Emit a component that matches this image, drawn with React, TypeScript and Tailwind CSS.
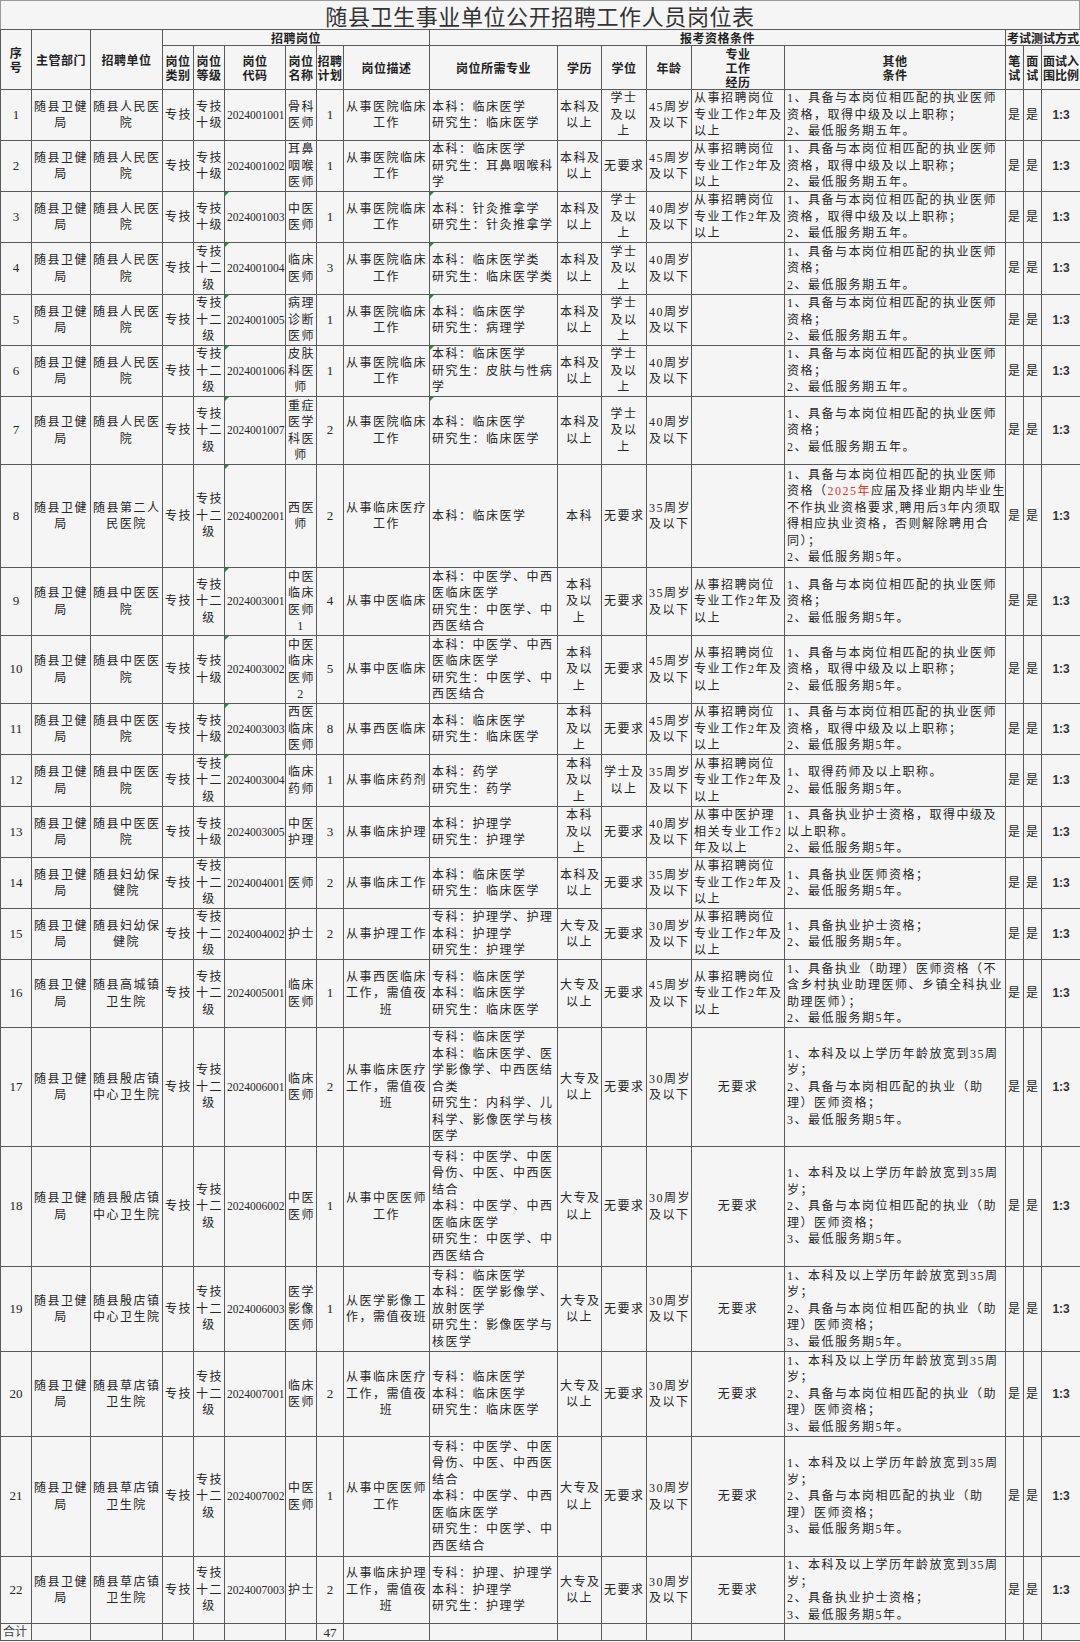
import React from 'react';
import clsx from 'clsx';

type Row = {
  no: number;
  unit: string;
  grade: string;
  code: string;
  name: string;
  plan: number;
  desc: string;
  major: string;
  edu: string;
  degree: string;
  age: string;
  exp: string;
  other: React.ReactNode;
  h: string;
  mark?: 'code' | 'both';
};

const dept = '随县卫健\n局';
const g10 = '专技\n十级';
const g12 = '专技\n十二\n级';
const exp2 = '从事招聘岗位\n专业工作2年及\n以上';
const edu1 = '本科及\n以上';
const edu2 = '本科\n及以\n上';
const edu3 = '大专及\n以上';
const deg1 = '学士\n及以\n上';
const none = '无要求';
const descHosp = '从事医院临床\n工作';

const oth1 = '1、具备与本岗位相匹配的执业医师\n资格，取得中级及以上职称；\n2、最低服务期五年。';
const oth4 = '1、具备与本岗位相匹配的执业医师\n资格；\n2、最低服务期五年。';
const oth9 = '1、具备与本岗位相匹配的执业医师\n资格；\n2、最低服务期5年。';
const oth10 = '1、具备与本岗位相匹配的执业医师\n资格，取得中级及以上职称；\n2、最低服务期5年。';
const oth17 = '1、本科及以上学历年龄放宽到35周\n岁；\n2、具备与本岗相匹配的执业（助\n理）医师资格；\n3、最低服务期5年。';
const oth18 = '1、本科及以上学历年龄放宽到35周\n岁；\n2、具备与本岗位相匹配的执业（助\n理）医师资格；\n3、最低服务期5年。';
const oth22 = '1、本科及以上学历年龄放宽到35周\n岁；\n2、具备执业护士资格；\n3、最低服务期5年。';

// row 8 has a red year inside, so lines are laid out one by one
const oth8 = (
  <>
    <div>1、具备与本岗位相匹配的执业医师</div>
    <div>
      资格（<span className="text-[#d9352b]">2025年</span>应届及择业期内毕业生
    </div>
    <div>不作执业资格要求,聘用后3年内须取</div>
    <div>得相应执业资格，否则解除聘用合</div>
    <div>同）；</div>
    <div>2、最低服务期5年。</div>
  </>
);

const tcmMajor = '本科：中医学、中西\n医临床医学\n研究生：中医学、中\n西医结合';
const tcmMajor3 = '专科：中医学、中医\n骨伤、中医、中西医\n结合\n本科：中医学、中西\n医临床医学\n研究生：中医学、中\n西医结合';

const rows: Row[] = [
  { no: 1, unit: '随县人民医\n院', grade: g10, code: '2024001001', name: '骨科\n医师', plan: 1, desc: descHosp, major: '本科：临床医学\n研究生：临床医学', edu: edu1, degree: deg1, age: '45周岁\n及以下', exp: exp2, other: oth1, h: 'h-[51px]' },
  { no: 2, unit: '随县人民医\n院', grade: g10, code: '2024001002', name: '耳鼻\n咽喉\n医师', plan: 1, desc: descHosp, major: '本科：临床医学\n研究生：耳鼻咽喉科\n学', edu: edu1, degree: none, age: '45周岁\n及以下', exp: exp2, other: oth1, h: 'h-[51px]' },
  { no: 3, unit: '随县人民医\n院', grade: g10, code: '2024001003', name: '中医\n医师', plan: 1, desc: descHosp, major: '本科：针灸推拿学\n研究生：针灸推拿学', edu: edu1, degree: deg1, age: '40周岁\n及以下', exp: exp2, other: oth1, h: 'h-[51px]', mark: 'both' },
  { no: 4, unit: '随县人民医\n院', grade: g12, code: '2024001004', name: '临床\n医师', plan: 3, desc: descHosp, major: '本科：临床医学类\n研究生：临床医学类', edu: edu1, degree: deg1, age: '40周岁\n及以下', exp: '', other: oth4, h: 'h-[52px]', mark: 'both' },
  { no: 5, unit: '随县人民医\n院', grade: g12, code: '2024001005', name: '病理\n诊断\n医师', plan: 1, desc: descHosp, major: '本科：临床医学\n研究生：病理学', edu: edu1, degree: deg1, age: '40周岁\n及以下', exp: '', other: oth4, h: 'h-[51px]', mark: 'both' },
  { no: 6, unit: '随县人民医\n院', grade: g12, code: '2024001006', name: '皮肤\n科医\n师', plan: 1, desc: descHosp, major: '本科：临床医学\n研究生：皮肤与性病\n学', edu: edu1, degree: deg1, age: '40周岁\n及以下', exp: '', other: oth4, h: 'h-[51px]', mark: 'both' },
  { no: 7, unit: '随县人民医\n院', grade: g12, code: '2024001007', name: '重症\n医学\n科医\n师', plan: 2, desc: descHosp, major: '本科：临床医学\n研究生：临床医学', edu: edu1, degree: deg1, age: '40周岁\n及以下', exp: '', other: oth4, h: 'h-[68px]', mark: 'both' },
  { no: 8, unit: '随县第二人\n民医院', grade: g12, code: '2024002001', name: '西医\n师', plan: 2, desc: '从事临床医疗\n工作', major: '本科：临床医学', edu: '本科', degree: none, age: '35周岁\n及以下', exp: '', other: oth8, h: 'h-[103px]', mark: 'code' },
  { no: 9, unit: '随县中医医\n院', grade: g12, code: '2024003001', name: '中医\n临床\n医师\n1', plan: 4, desc: '从事中医临床', major: tcmMajor, edu: edu2, degree: none, age: '35周岁\n及以下', exp: exp2, other: oth9, h: 'h-[68px]', mark: 'code' },
  { no: 10, unit: '随县中医医\n院', grade: g10, code: '2024003002', name: '中医\n临床\n医师\n2', plan: 5, desc: '从事中医临床', major: tcmMajor, edu: edu2, degree: none, age: '45周岁\n及以下', exp: exp2, other: oth10, h: 'h-[68px]', mark: 'code' },
  { no: 11, unit: '随县中医医\n院', grade: g10, code: '2024003003', name: '西医\n临床\n医师', plan: 8, desc: '从事西医临床', major: '本科：临床医学\n研究生：临床医学', edu: edu2, degree: none, age: '45周岁\n及以下', exp: exp2, other: oth10, h: 'h-[51px]', mark: 'code' },
  { no: 12, unit: '随县中医医\n院', grade: g12, code: '2024003004', name: '临床\n药师', plan: 1, desc: '从事临床药剂', major: '本科：药学\n研究生：药学', edu: edu2, degree: '学士及\n以上', age: '35周岁\n及以下', exp: exp2, other: '1、取得药师及以上职称。\n2、最低服务期5年。', h: 'h-[52px]', mark: 'code' },
  { no: 13, unit: '随县中医医\n院', grade: g10, code: '2024003005', name: '中医\n护理', plan: 3, desc: '从事临床护理', major: '本科：护理学\n研究生：护理学', edu: edu2, degree: none, age: '40周岁\n及以下', exp: '从事中医护理\n相关专业工作2\n年及以上', other: '1、具备执业护士资格，取得中级及\n以上职称。\n2、最低服务期5年。', h: 'h-[51px]' },
  { no: 14, unit: '随县妇幼保\n健院', grade: g12, code: '2024004001', name: '医师', plan: 2, desc: '从事临床工作', major: '本科：临床医学\n研究生：临床医学', edu: edu1, degree: none, age: '35周岁\n及以下', exp: exp2, other: '1、具备执业医师资格；\n2、最低服务期5年。', h: 'h-[51px]' },
  { no: 15, unit: '随县妇幼保\n健院', grade: g12, code: '2024004002', name: '护士', plan: 2, desc: '从事护理工作', major: '专科：护理学、护理\n本科：护理学\n研究生：护理学', edu: edu3, degree: none, age: '30周岁\n及以下', exp: exp2, other: '1、具备执业护士资格；\n2、最低服务期5年。', h: 'h-[51px]' },
  { no: 16, unit: '随县高城镇\n卫生院', grade: g12, code: '2024005001', name: '临床\n医师', plan: 1, desc: '从事西医临床\n工作，需值夜\n班', major: '专科：临床医学\n本科：临床医学\n研究生：临床医学', edu: edu3, degree: none, age: '45周岁\n及以下', exp: exp2, other: '1、具备执业（助理）医师资格（不\n含乡村执业助理医师、乡镇全科执业\n助理医师）；\n2、最低服务期5年。', h: 'h-[68px]' },
  { no: 17, unit: '随县殷店镇\n中心卫生院', grade: g12, code: '2024006001', name: '临床\n医师', plan: 2, desc: '从事临床医疗\n工作，需值夜\n班', major: '专科：临床医学\n本科：临床医学、医\n学影像学、中西医结\n合类\n研究生：内科学、儿\n科学、影像医学与核\n医学', edu: edu3, degree: none, age: '30周岁\n及以下', exp: none, other: oth17, h: 'h-[119px]' },
  { no: 18, unit: '随县殷店镇\n中心卫生院', grade: g12, code: '2024006002', name: '中医\n医师', plan: 1, desc: '从事中医医师\n工作', major: tcmMajor3, edu: edu3, degree: none, age: '30周岁\n及以下', exp: none, other: oth18, h: 'h-[120px]' },
  { no: 19, unit: '随县殷店镇\n中心卫生院', grade: g12, code: '2024006003', name: '医学\n影像\n医师', plan: 1, desc: '从医学影像工\n作，需值夜班', major: '专科：临床医学\n本科：医学影像学、\n放射医学\n研究生：影像医学与\n核医学', edu: edu3, degree: none, age: '30周岁\n及以下', exp: none, other: oth18, h: 'h-[85px]' },
  { no: 20, unit: '随县草店镇\n卫生院', grade: g12, code: '2024007001', name: '临床\n医师', plan: 2, desc: '从事临床医疗\n工作，需值夜\n班', major: '专科：临床医学\n本科：临床医学\n研究生：临床医学', edu: edu3, degree: none, age: '30周岁\n及以下', exp: none, other: oth18, h: 'h-[85px]' },
  { no: 21, unit: '随县草店镇\n卫生院', grade: g12, code: '2024007002', name: '中医\n医师', plan: 1, desc: '从事中医医师\n工作', major: tcmMajor3, edu: edu3, degree: none, age: '30周岁\n及以下', exp: none, other: oth17, h: 'h-[120px]' },
  { no: 22, unit: '随县草店镇\n卫生院', grade: g12, code: '2024007003', name: '护士', plan: 2, desc: '从事临床护理\n工作，需值夜\n班', major: '专科：护理、护理学\n本科：护理学\n研究生：护理学', edu: edu3, degree: none, age: '30周岁\n及以下', exp: none, other: oth22, h: 'h-[67px]' },
];

const widths = ['w-[31px]', 'w-[59px]', 'w-[72px]', 'w-[31px]', 'w-[31px]', 'w-[61px]', 'w-[31px]', 'w-[27px]', 'w-[86px]', 'w-[128px]', 'w-[44px]', 'w-[45px]', 'w-[45px]', 'w-[93px]', 'w-[221px]', 'w-[18px]', 'w-[18px]', 'w-[39px]'];

function Td({ children, className, mark }: { children?: React.ReactNode; className?: string; mark?: boolean }) {
  return (
    <td className={clsx('relative border border-[#5a5a5a] px-[2px] py-0 align-middle whitespace-pre overflow-hidden', className)}>
      {mark && <span className="absolute left-0 top-0 h-0 w-0 border-t-[4px] border-r-[4px] border-t-[#1f8f3f] border-r-transparent" />}
      {children}
    </td>
  );
}

function Th({ children, className, colSpan, rowSpan }: { children?: React.ReactNode; className?: string; colSpan?: number; rowSpan?: number }) {
  return (
    <th colSpan={colSpan} rowSpan={rowSpan} className={clsx('border border-[#5a5a5a] px-0 py-0 align-middle whitespace-pre text-center font-bold', className)}>
      {children}
    </th>
  );
}

export default function App() {
  return (
    <div className="w-[1080px] h-[1642px] bg-[#f5f5f5] text-[#262626] overflow-hidden">
      <div className="h-[29px] border-x border-t border-[#9a9a9a] text-center text-[22px] leading-[29px] tracking-[0.6px] text-[#333] font-['Noto_Sans_CJK_SC',sans-serif]">
        随县卫生事业单位公开招聘工作人员岗位表
      </div>
      <table className="w-[1080px] table-fixed border-collapse font-['Liberation_Serif','Noto_Sans_CJK_SC',serif] text-[12px] leading-[16.5px] tracking-[1.5px]">
        <colgroup>
          {widths.map((w, i) => (
            <col key={i} className={w} />
          ))}
        </colgroup>
        <thead className="font-['Noto_Sans_CJK_SC',sans-serif] text-[12px] leading-[14px] tracking-[0.5px] text-[#222]">
          <tr className="h-[16px]">
            <Th rowSpan={2}>{'序\n号'}</Th>
            <Th rowSpan={2}>主管部门</Th>
            <Th rowSpan={2}>招聘单位</Th>
            <Th colSpan={6}>招聘岗位</Th>
            <Th colSpan={6}>报考资格条件</Th>
            <Th colSpan={3} className="tracking-normal">考试测试方式</Th>
          </tr>
          <tr className="h-[44px]">
            <Th>{'岗位\n类别'}</Th>
            <Th>{'岗位\n等级'}</Th>
            <Th>{'岗位\n代码'}</Th>
            <Th>{'岗位\n名称'}</Th>
            <Th>{'招聘\n计划'}</Th>
            <Th>岗位描述</Th>
            <Th>岗位所需专业</Th>
            <Th>学历</Th>
            <Th>学位</Th>
            <Th>年龄</Th>
            <Th>{'专业\n工作\n经历'}</Th>
            <Th>{'其他\n条件'}</Th>
            <Th>{'笔\n试'}</Th>
            <Th>{'面\n试'}</Th>
            <Th className="tracking-normal">{'面试入\n围比例'}</Th>
          </tr>
        </thead>
        <tbody>
          {rows.map((r) => (
            <tr key={r.no} className={r.h}>
              <Td className="text-center text-[13px] tracking-normal">{r.no}</Td>
              <Td className="text-center">{dept}</Td>
              <Td className="text-center">{r.unit}</Td>
              <Td className="text-center">专技</Td>
              <Td className="text-center">{r.grade}</Td>
              <Td className="text-center text-[11.5px] tracking-normal px-0" mark={!!r.mark}>{r.code}</Td>
              <Td className="text-center">{r.name}</Td>
              <Td className="text-center text-[13px] tracking-normal">{r.plan}</Td>
              <Td className="text-center">{r.desc}</Td>
              <Td className="text-left" mark={r.mark === 'both'}>{r.major}</Td>
              <Td className="text-center">{r.edu}</Td>
              <Td className="text-center">{r.degree}</Td>
              <Td className="text-center">{r.age}</Td>
              <Td className={r.exp === none ? 'text-center' : 'text-left'}>{r.exp}</Td>
              <Td className="text-left">{r.other}</Td>
              <Td className="text-center px-0">是</Td>
              <Td className="text-center px-0">是</Td>
              <Td className="text-center tracking-normal font-['Liberation_Sans',sans-serif] font-bold text-[12px] text-[#333]">1:3</Td>
            </tr>
          ))}
          <tr className="h-[17px]">
            <Td className="text-left text-[12px] tracking-normal leading-[15px] text-[#444]">合计</Td>
            <Td />
            <Td />
            <Td />
            <Td />
            <Td />
            <Td />
            <Td className="text-center text-[13px] tracking-normal leading-[15px]">47</Td>
            <Td />
            <Td />
            <Td />
            <Td />
            <Td />
            <Td />
            <Td />
            <Td />
            <Td />
            <Td />
          </tr>
        </tbody>
      </table>
    </div>
  );
}
